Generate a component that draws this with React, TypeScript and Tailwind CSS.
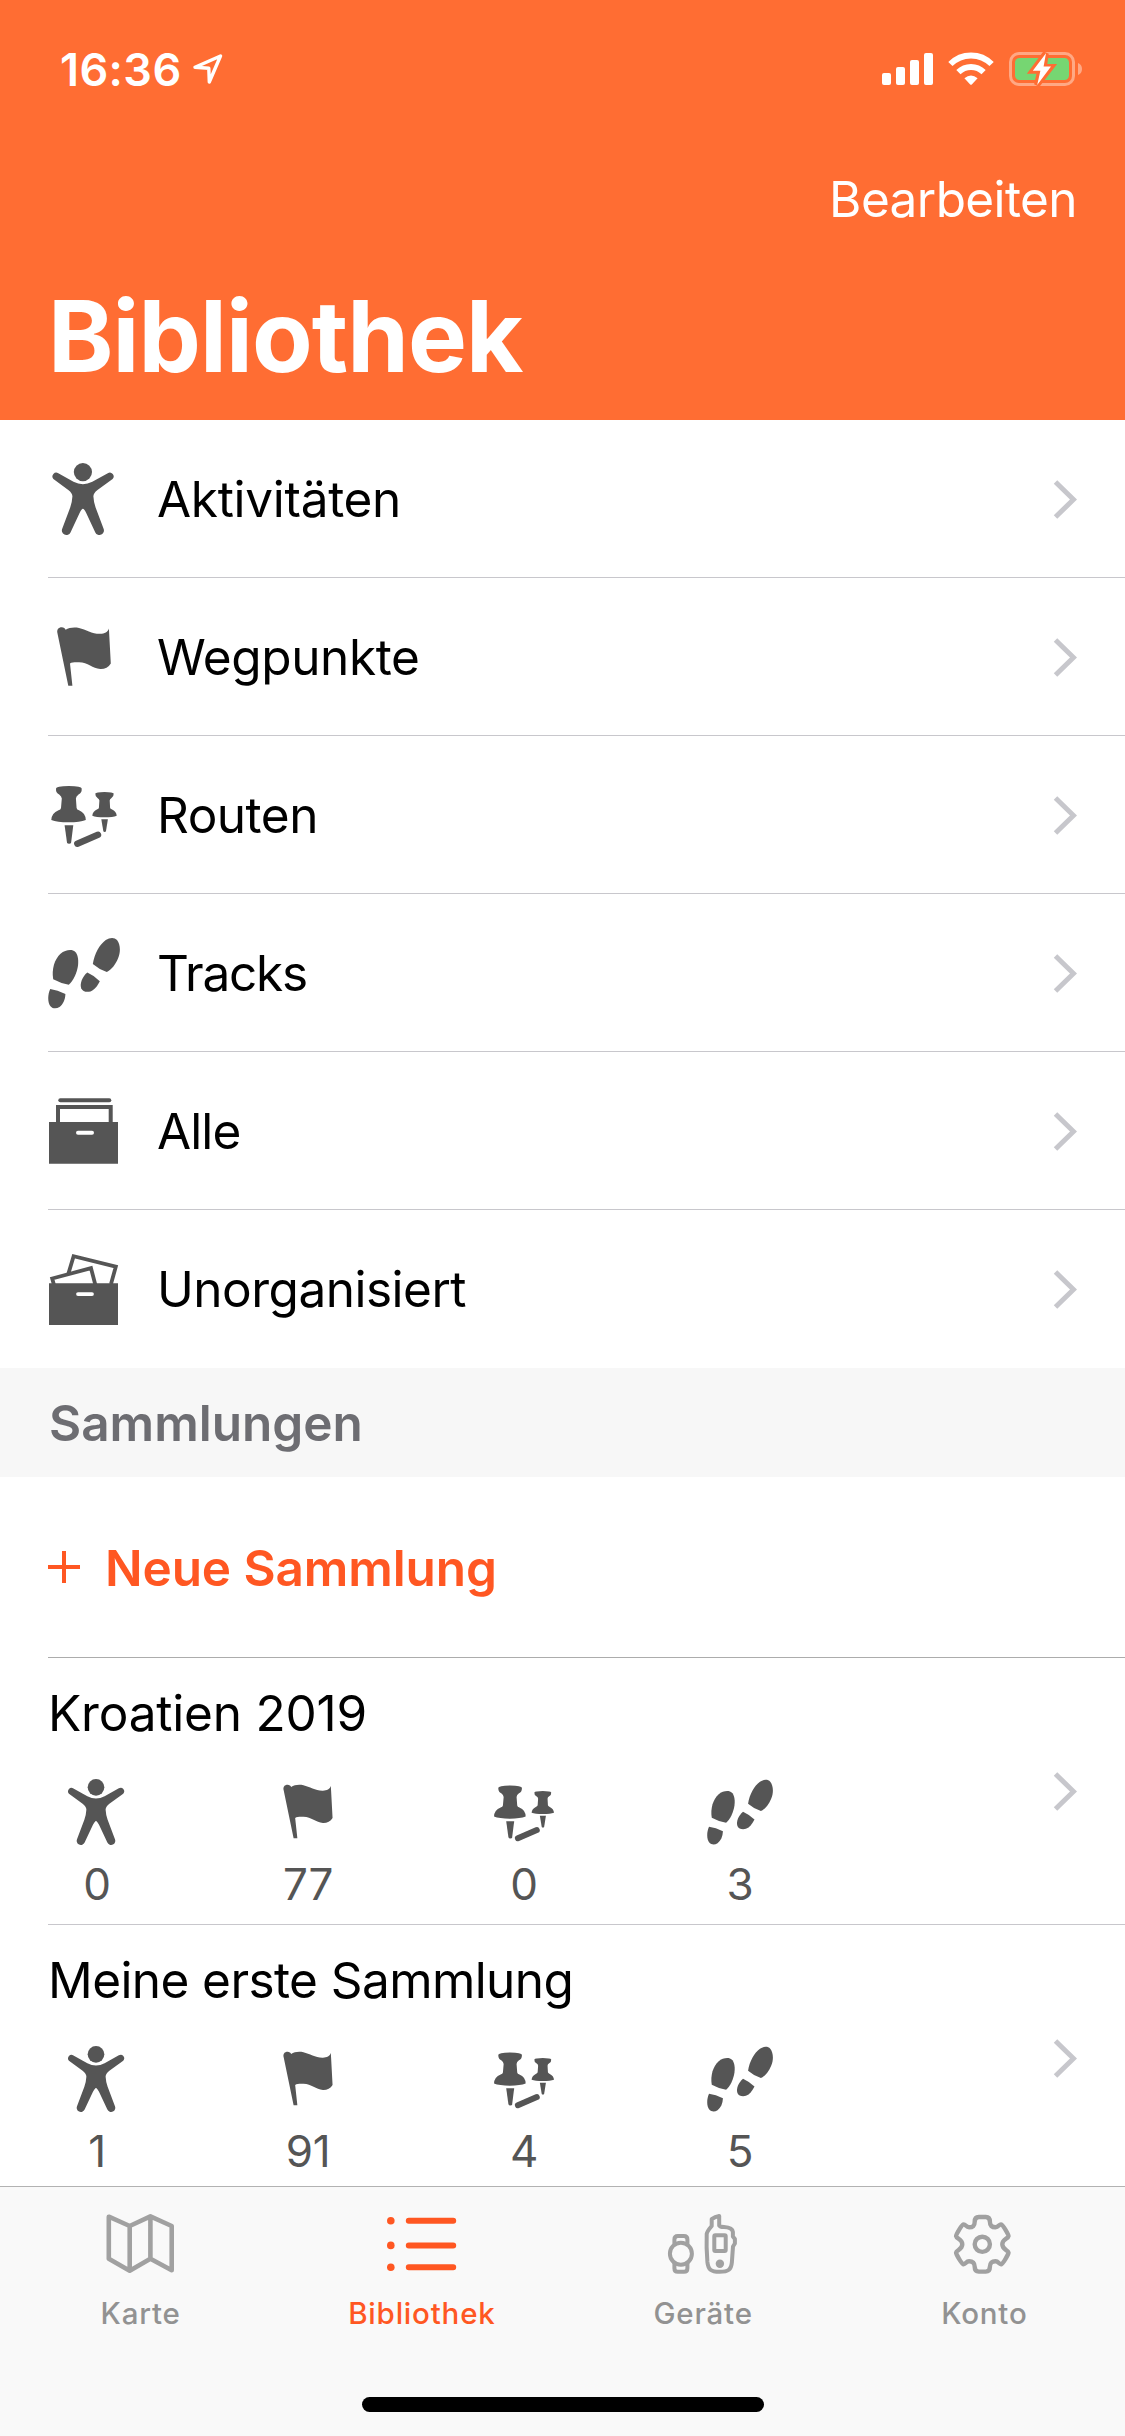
import type { ReactNode } from "react";

type IconProps = { className?: string };

function PersonIcon({ className }: IconProps) {
  return (
    <svg viewBox="0 0 72 72" className={className} fill="currentColor">
      <circle cx="34.9" cy="9.1" r="9.1" />
      <path d="M10.3 10.3 L25.5 18.8 Q34.9 23.6 44.3 18.8 L59.8 10.2 A3.8 3.8 0 0 1 64.6 16 L49.5 27 Q45.3 30.3 45.4 33.5 Q45.6 38.5 47.6 44.5 L55.5 65.5 A4.4 4.4 0 0 1 47.3 69.4 L38.2 50 Q36 45.8 34.9 45.8 Q33.8 45.8 31.6 50 L22.5 69.4 A4.4 4.4 0 0 1 14.3 65.5 L22.2 44.5 Q24.2 38.5 24.4 33.5 Q24.5 30.3 20.3 27 L5.4 16 A3.8 3.8 0 0 1 10.3 10.3 Z" />
    </svg>
  );
}

function FlagIcon({ className }: IconProps) {
  return (
    <svg viewBox="0 0 72 72" className={className} fill="currentColor">
      <path d="M9.4 12 C8.6 8.5 10.5 6.2 13.7 6.2 C15.8 6.2 17 7.2 17.6 8.7 C21 6.6 26 5.8 31 6.9 C38 8.5 44 13 52.3 12.8 C56.5 12.7 60 11 60.9 7.4 L62.8 42.6 C60.5 46.5 56.5 48.3 52.3 48.1 C44.5 47.5 40 41.5 31 41.3 C27 41.2 24 41.2 22 42.5 L24.4 64.7 H20.3 Z" />
    </svg>
  );
}

function PinsIcon({ className }: IconProps) {
  return (
    <svg viewBox="0 0 72 72" className={className} fill="currentColor">
      <path d="M8 9.6 Q8 7.2 20.8 7 Q33.7 7.2 33.7 9.6 Q34 14 30.5 15.5 Q28 17.3 27.9 19.5 L28.6 29 Q28.8 30.7 31 31.2 Q37.7 34 37.8 41 Q32 43.3 20.6 43.3 Q9 43.3 3.3 41 Q3.5 34 10.5 31.2 Q12.8 30.7 13 29 L13.8 19.5 Q13.6 17.3 11.2 15.5 Q7.7 14 8 9.6 Z" />
      <path d="M16.6 46.2 H25.3 L23.1 63.5 Q22.9 64.8 21.1 64.8 Q19.3 64.8 19 63.5 Z" />
      <path d="M47.3 14.6 Q48 13.2 56.5 13.1 Q65 13.2 65.7 14.6 Q65.8 18 63.5 18.9 Q61.7 19.9 61.7 21.5 L62.1 28.7 Q62.3 29.8 63.7 30.2 Q68.5 32.5 68.7 36.7 Q65 38.2 56.5 38.2 Q48 38.2 44.3 36.7 Q44.5 32.5 49.3 30.2 Q50.7 29.8 50.9 28.7 L51.4 21.5 Q51.3 19.9 49.5 18.9 Q47.2 18 47.3 14.6 Z" />
      <path d="M53.3 40.2 H59.9 L58 52 Q57.8 53 56.6 53 Q55.5 53 55.3 52 Z" />
      <path d="M29.3 64.7 L50 55.7" stroke="currentColor" strokeWidth="6.4" strokeLinecap="round" />
    </svg>
  );
}

function StepsIcon({ className }: IconProps) {
  return (
    <svg viewBox="0 0 72 72" className={className} fill="currentColor">
      <path d="M5.2 42.2 C3.5 32 6.5 22.5 12.5 16.8 C16.5 13.4 21.5 12.5 25 13.5 C29.5 15 30.8 21.5 30 28.5 C29 36 25.5 43.5 20.8 47.8 Q12.5 46.2 5.2 42.2 Z" />
      <path d="M2.2 52 Q9.5 52.8 17.4 57 C17.2 63 15 67.5 11.5 70 C8.5 72 4.8 71.8 2.7 69.5 C-.5 66 -.5 58 2.2 52 Z" />
      <path d="M44.8 27 C46.5 16.5 51.5 7.5 57.8 3 C62 .2 66.5 .2 69 3 C72.5 7.5 72.8 15 70 21.5 C67.5 27.5 63.5 32.8 58.8 35 Q51 32.4 44.8 27 Z" />
      <path d="M39.3 35.6 Q46 38.5 51.8 44.3 C49.5 49 46.5 53 42.5 54.4 C38.5 55.5 34.5 54.5 33.2 51.2 C31.5 46.5 34.5 39.5 39.3 35.6 Z" />
    </svg>
  );
}

function ArchiveIcon({ className }: IconProps) {
  return (
    <svg viewBox="0 0 72 72" className={className} fill="none" stroke="currentColor" strokeWidth="4">
      <path d="M12.3 5.2 H61.3" strokeLinecap="round" />
      <path d="M10 29 V12 H62.7 V29" />
      <path d="M1 27 H70 V68.7 H1 Z" fill="currentColor" stroke="none" />
      <path d="M30 37.8 H44" stroke="#fff" strokeLinecap="round" />
    </svg>
  );
}

function UnsortedIcon({ className }: IconProps) {
  return (
    <svg viewBox="0 0 72 72" className={className} fill="none" stroke="currentColor" strokeWidth="3.8">
      <path d="M20.3 21 L25.6 3.2 L67.8 13.7 L63 31" />
      <path d="M6 32 L4.2 25.5 L43 15.2 L47.4 32" />
      <path d="M1 30.3 H70 V72 H1 Z" fill="currentColor" stroke="none" />
      <path d="M30 41.1 H44" stroke="#fff" strokeLinecap="round" />
    </svg>
  );
}

function Chevron() {
  return (
    <svg viewBox="0 0 24 39" className="mt-px h-[39px] w-6 shrink-0 text-[#c7c7cc]" fill="none" stroke="currentColor" strokeWidth="5">
      <path d="M2.5 2 L20.5 19.5 L2.5 37" />
    </svg>
  );
}

function StatusIcons() {
  return (
    <div className="flex items-center">
      <svg viewBox="0 0 51 34" className="h-[34px] w-[51px]" fill="#fff">
        <rect x="0" y="21" width="9" height="12" rx="2" />
        <rect x="14" y="15" width="9" height="18" rx="2" />
        <rect x="28" y="8" width="9" height="25" rx="2" />
        <rect x="42" y="1" width="9" height="32" rx="2" />
      </svg>
      <svg viewBox="0 0 46 34" className="ml-[15px] h-[34px] w-[46px]" fill="none" stroke="#fff" strokeWidth="6">
        <path d="M2.4 12 A29 29 0 0 1 43.6 12" />
        <path d="M10.4 20.2 A18 18 0 0 1 35.6 20.2" />
        <path d="M16.4 26.2 Q23 20.8 29.6 26.2 L23.8 32.4 Q23 33.3 22.2 32.4 Z" fill="#fff" stroke="none" />
      </svg>
      <svg viewBox="0 0 74 34" className="ml-[15px] h-[34px] w-[74px]">
        <rect x="1.5" y="1.5" width="63" height="31" rx="8.5" fill="none" stroke="#ffa884" strokeWidth="3" />
        <path d="M69 11 Q73 12.5 73 17 Q73 21.5 69 23 Z" fill="#ffa884" />
        <rect x="6" y="6" width="54" height="22" rx="4.5" fill="#76d672" />
        <path d="M36.8 1.2 L23.8 18.8 H31.2 L28 33 L42 15 H34.8 Z" fill="#ff6d33" stroke="#ff6d33" strokeWidth="6" />
        <path d="M37 1.2 L23.8 18.8 H31.4 L28.2 33 L42 14.6 H34.6 Z" fill="#fff" />
      </svg>
    </div>
  );
}

const MENU = [
  { label: "Aktivitäten", Icon: PersonIcon, tracking: "tracking-[-0.3px]" },
  { label: "Wegpunkte", Icon: FlagIcon, tracking: "tracking-[-0.4px]" },
  { label: "Routen", Icon: PinsIcon, tracking: "tracking-[-0.5px]" },
  { label: "Tracks", Icon: StepsIcon, tracking: "tracking-[-1.2px]" },
  { label: "Alle", Icon: ArchiveIcon, tracking: "tracking-[-0.9px]" },
  { label: "Unorganisiert", Icon: UnsortedIcon, tracking: "tracking-[-0.5px]" },
];

const COLLECTIONS = [
  { title: "Kroatien 2019", counts: [0, 77, 0, 3], tracking: "tracking-[-0.2px]" },
  { title: "Meine erste Sammlung", counts: [1, 91, 4, 5], tracking: "tracking-[-0.58px]" },
];

const COUNT_ICONS = [PersonIcon, FlagIcon, PinsIcon, StepsIcon];

function MapIcon() {
  return (
    <svg viewBox="0 0 72 66" className="h-[66px] w-[72px]" fill="none" stroke="currentColor" strokeWidth="4.6" strokeLinejoin="round">
      <path d="M3.8 6.7 L24.7 16 L45.4 6.3 L66.7 16 V60.3 L45.4 48.7 L24.7 60.7 L3.8 48.7 Z M24.7 16 V60.7 M45.4 6.3 V48.7" />
    </svg>
  );
}

function ListIcon() {
  return (
    <svg viewBox="0 0 72 66" className="h-[66px] w-[72px]" fill="currentColor" stroke="currentColor" strokeWidth="6" strokeLinecap="round">
      <path d="M22.8 10.7 H67.2 M22.8 35.4 H67.2 M22.8 57.2 H67.2" />
      <g stroke="none">
        <circle cx="4.8" cy="10.7" r="3.8" />
        <circle cx="4.8" cy="35.4" r="3.8" />
        <circle cx="4.8" cy="57.2" r="3.8" />
      </g>
    </svg>
  );
}

function DevicesIcon() {
  return (
    <svg viewBox="0 0 72 66" className="h-[66px] w-[72px]" fill="none" stroke="currentColor" strokeWidth="4" strokeLinejoin="round">
      <circle cx="13.9" cy="43.7" r="11" />
      <path d="M7.4 34.5 V29.5 Q7.4 26 10.9 26 H16.9 Q20.4 26 20.4 29.5 V34.5" />
      <path d="M7.4 53 V58.2 Q7.4 61.7 10.9 61.7 H16.9 Q20.4 61.7 20.4 58.2 V53" />
      <path d="M44.7 9.2 Q48 6.7 52.2 6 V15.5 Q53 17 57 17.1 Q65.5 17.6 65.9 22 V26.5 L67.9 29 V33.5 L66 36.5 L64.9 52 C64.3 59.5 61.5 61.8 52.6 61.8 C43.8 61.8 41.2 59.5 40.4 52 Q39.2 37 39.7 24 Q40 21.5 44.7 16 Z" />
      <rect x="47.3" y="25.3" width="11.4" height="15.6" rx="1" />
      <circle cx="52.9" cy="53.7" r="4.2" fill="currentColor" stroke="none" />
    </svg>
  );
}

function GearIcon() {
  return (
    <svg viewBox="0 0 72 66" className="h-[66px] w-[72px]" fill="none" stroke="currentColor" strokeWidth="4.4" strokeLinejoin="round">
      <g transform="translate(34.3 34.3)">
        <circle r="7.6" />
        <path d="M-7.6 -22.5 Q-7.6 -27.3 -3.5 -27.3 H3.5 Q7.6 -27.3 7.6 -22.5 C7.6 -18.5 9.5 -17 13.2 -17 C16.5 -17 16.8 -20.6 19.2 -19.8 C20.5 -19.3 26.3 -10 26.2 -8.2 C25.8 -5.5 20 -5.5 20 0 C20 5.5 25.8 5.5 26.2 8.2 C26.3 10 20.5 19.3 19.2 19.8 C16.8 20.6 16.5 17 13.2 17 C9.5 17 7.6 18.5 7.6 22.5 Q7.6 27.3 3.5 27.3 H-3.5 Q-7.6 27.3 -7.6 22.5 C-7.6 18.5 -9.5 17 -13.2 17 C-16.5 17 -16.8 20.6 -19.2 19.8 C-20.5 19.3 -26.3 10 -26.2 8.2 C-25.8 5.5 -20 5.5 -20 0 C-20 -5.5 -25.8 -5.5 -26.2 -8.2 C-26.3 -10 -20.5 -19.3 -19.2 -19.8 C-16.8 -20.6 -16.5 -17 -13.2 -17 C-9.5 -17 -7.6 -18.5 -7.6 -22.5 Z" />
      </g>
    </svg>
  );
}

function Tab({ label, active, children }: { label: string; active?: boolean; children: ReactNode }) {
  return (
    <a className={`flex flex-col items-center pt-[23px] ${active ? "text-[#ff5722]" : "text-[#a1a1a1]"}`}>
      {children}
      <span className={`mt-[19px] text-[29.5px] leading-9 font-medium tracking-[0.8px] ${active ? "" : "text-[#929292]"}`}>{label}</span>
    </a>
  );
}

export default function App() {
  return (
    <div className="flex h-[2436px] w-[1125px] flex-col overflow-hidden bg-white font-['Inter','Liberation_Sans',sans-serif] text-black">
      {/* HEADER */}
      <header className="flex h-[420px] shrink-0 flex-col bg-[#ff6d33] text-white">
        <div className="flex h-[138px] items-center justify-between pr-[42px] pl-[60px]">
          <div className="flex items-center gap-[11px]">
            <span className="text-[45px] leading-none font-semibold tracking-[0.4px]">16:36</span>
            <svg viewBox="0 0 30 30" className="h-[30px] w-[30px]" fill="none" stroke="#fff" strokeWidth="3.4" strokeLinejoin="round">
              <path d="M2 13.2 L27.5 2 L16.3 28 L15.8 14.2 Z" />
            </svg>
          </div>
          <StatusIcons />
        </div>
        <div className="flex h-[120px] items-center justify-end pr-12">
          <span className="pt-[3px] text-[49.5px] leading-none tracking-[-0.6px]">Bearbeiten</span>
        </div>
        <h1 className="pl-12 text-[99px] leading-[156px] font-bold tracking-[-0.9px]">Bibliothek</h1>
      </header>

      {/* LIBRARY TYPES */}
      <nav className="shrink-0">
        {MENU.map(({ label, Icon, tracking }, idx) => (
          <div key={label} className="h-[158px] pl-12">
            <div className={`flex h-full items-center border-b pr-12 ${idx < MENU.length - 1 ? "border-[#c8c7cc]" : "border-transparent"}`}>
              <Icon className="size-[72px] shrink-0 text-[#555]" />
              <span className={`ml-[37px] flex-1 pt-[3px] text-[49.5px] leading-none ${tracking}`}>{label}</span>
              <Chevron />
            </div>
          </div>
        ))}
      </nav>

      {/* COLLECTIONS */}
      <h2 className="flex h-[109px] shrink-0 items-center bg-[#f7f7f7] pt-[2px] pl-[49px] text-[49.5px] leading-none font-semibold text-[#6d6d72]">
        Sammlungen
      </h2>
      <section className="flex-1 overflow-hidden">
        <div className="h-[181px] pl-12">
          <button className="flex h-full w-full items-center border-b border-[#acacac] text-[#ff5722]">
            <svg viewBox="0 0 32 32" className="size-8" stroke="currentColor" strokeWidth="4">
              <path d="M0 16 H32 M16 0 V32" />
            </svg>
            <span className="ml-[25px] pt-[3px] text-[49.5px] leading-none font-semibold tracking-[-0.1px]">Neue Sammlung</span>
          </button>
        </div>
        {COLLECTIONS.map(({ title, counts, tracking }) => (
          <div key={title} className="h-[267px] pl-12">
            <div className="flex h-full items-center border-b border-[#c8c7cc] pr-12">
              <div className="h-full flex-1 pt-[30px]">
                <h3 className={`text-[49.5px] leading-[50px] ${tracking}`}>{title}</h3>
                <ul className="mt-[41px] grid grid-cols-[211px_216px_216px_66px] pl-4 text-[#555]">
                  {COUNT_ICONS.map((Icon, i) => (
                    <li key={i} className="flex w-[66px] flex-col items-center">
                      <Icon className="size-[66px]" />
                      <span className="mt-[17px] text-[44px] leading-[44px] tracking-[-0.4px]">{counts[i]}</span>
                    </li>
                  ))}
                </ul>
              </div>
              <Chevron />
            </div>
          </div>
        ))}
      </section>

      {/* TAB BAR */}
      <footer className="flex h-[250px] shrink-0 flex-col items-center border-t border-[#b2b2b2] bg-[#f9f9f9]">
        <div className="grid h-[210px] w-full grid-cols-4">
          <Tab label="Karte">
            <MapIcon />
          </Tab>
          <Tab label="Bibliothek" active>
            <ListIcon />
          </Tab>
          <Tab label="Geräte">
            <DevicesIcon />
          </Tab>
          <Tab label="Konto">
            <GearIcon />
          </Tab>
        </div>
        <div className="h-[15px] w-[402px] rounded-full bg-black" />
      </footer>
    </div>
  );
}
